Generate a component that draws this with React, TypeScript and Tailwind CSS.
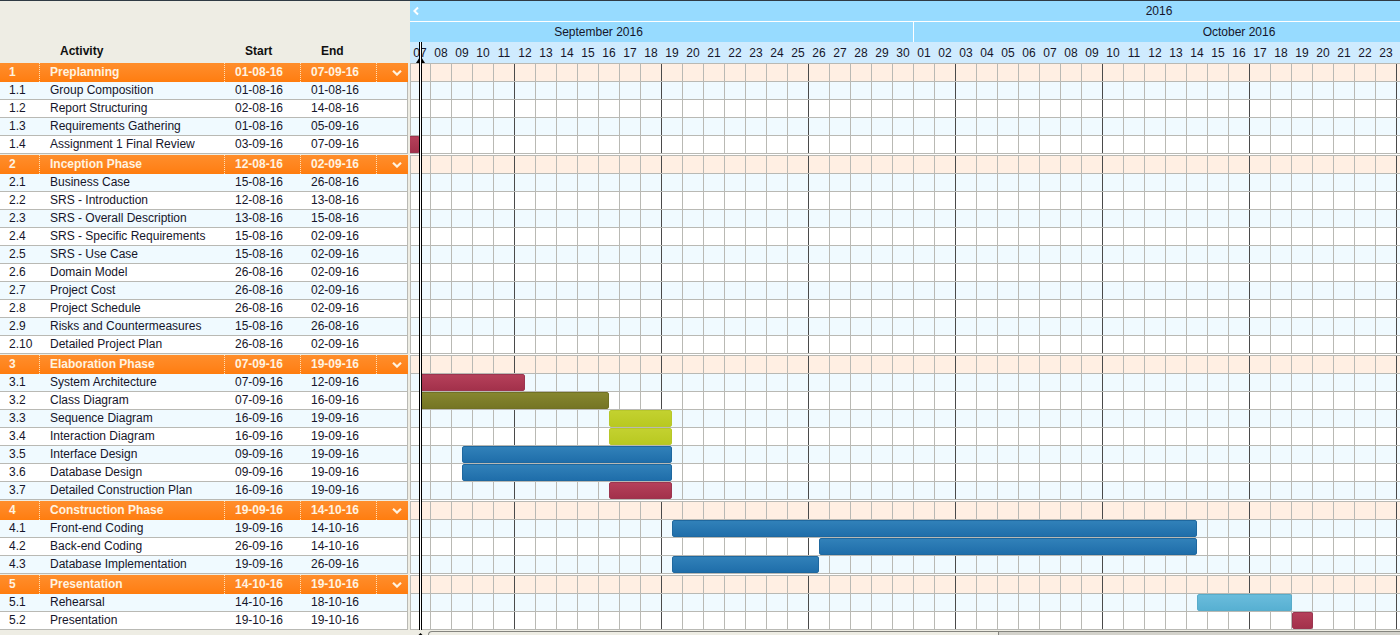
import React from "react";

type Tone = "crimson" | "olive" | "lime" | "blue" | "sky";
type Task = {
  id: string;
  name: string;
  start: string;
  end: string;
  bar?: { from: number; days: number; tone: Tone };
};
type Phase = { id: string; name: string; start: string; end: string; tasks: Task[] };

const DAY = 21;
const HALF_DAY = 10;

// Bar positions are counted in days from 7 September 2016.
const phases: Phase[] = [
  {
    id: "1", name: "Preplanning", start: "01-08-16", end: "07-09-16",
    tasks: [
      { id: "1.1", name: "Group Composition", start: "01-08-16", end: "01-08-16" },
      { id: "1.2", name: "Report Structuring", start: "02-08-16", end: "14-08-16" },
      { id: "1.3", name: "Requirements Gathering", start: "01-08-16", end: "05-09-16" },
      { id: "1.4", name: "Assignment 1 Final Review", start: "03-09-16", end: "07-09-16", bar: { from: -4, days: 4, tone: "crimson" } },
    ],
  },
  {
    id: "2", name: "Inception Phase", start: "12-08-16", end: "02-09-16",
    tasks: [
      { id: "2.1", name: "Business Case", start: "15-08-16", end: "26-08-16" },
      { id: "2.2", name: "SRS - Introduction", start: "12-08-16", end: "13-08-16" },
      { id: "2.3", name: "SRS - Overall Description", start: "13-08-16", end: "15-08-16" },
      { id: "2.4", name: "SRS - Specific Requirements", start: "15-08-16", end: "02-09-16" },
      { id: "2.5", name: "SRS - Use Case", start: "15-08-16", end: "02-09-16" },
      { id: "2.6", name: "Domain Model", start: "26-08-16", end: "02-09-16" },
      { id: "2.7", name: "Project Cost", start: "26-08-16", end: "02-09-16" },
      { id: "2.8", name: "Project Schedule", start: "26-08-16", end: "02-09-16" },
      { id: "2.9", name: "Risks and Countermeasures", start: "15-08-16", end: "26-08-16" },
      { id: "2.10", name: "Detailed Project Plan", start: "26-08-16", end: "02-09-16" },
    ],
  },
  {
    id: "3", name: "Elaboration Phase", start: "07-09-16", end: "19-09-16",
    tasks: [
      { id: "3.1", name: "System Architecture", start: "07-09-16", end: "12-09-16", bar: { from: 0, days: 5, tone: "crimson" } },
      { id: "3.2", name: "Class Diagram", start: "07-09-16", end: "16-09-16", bar: { from: 0, days: 9, tone: "olive" } },
      { id: "3.3", name: "Sequence Diagram", start: "16-09-16", end: "19-09-16", bar: { from: 9, days: 3, tone: "lime" } },
      { id: "3.4", name: "Interaction Diagram", start: "16-09-16", end: "19-09-16", bar: { from: 9, days: 3, tone: "lime" } },
      { id: "3.5", name: "Interface Design", start: "09-09-16", end: "19-09-16", bar: { from: 2, days: 10, tone: "blue" } },
      { id: "3.6", name: "Database Design", start: "09-09-16", end: "19-09-16", bar: { from: 2, days: 10, tone: "blue" } },
      { id: "3.7", name: "Detailed Construction Plan", start: "16-09-16", end: "19-09-16", bar: { from: 9, days: 3, tone: "crimson" } },
    ],
  },
  {
    id: "4", name: "Construction Phase", start: "19-09-16", end: "14-10-16",
    tasks: [
      { id: "4.1", name: "Front-end Coding", start: "19-09-16", end: "14-10-16", bar: { from: 12, days: 25, tone: "blue" } },
      { id: "4.2", name: "Back-end Coding", start: "26-09-16", end: "14-10-16", bar: { from: 19, days: 18, tone: "blue" } },
      { id: "4.3", name: "Database Implementation", start: "19-09-16", end: "26-09-16", bar: { from: 12, days: 7, tone: "blue" } },
    ],
  },
  {
    id: "5", name: "Presentation", start: "14-10-16", end: "19-10-16",
    tasks: [
      { id: "5.1", name: "Rehearsal", start: "14-10-16", end: "18-10-16", bar: { from: 37, days: 4.5, tone: "sky" } },
      { id: "5.2", name: "Presentation", start: "19-10-16", end: "19-10-16", bar: { from: 41.5, days: 1, tone: "crimson" } },
    ],
  },
];

const tones: Record<Tone, string> = {
  crimson: "border-[#9c3550] from-[#b5405a] to-[#a3314b]",
  olive: "border-[#717124] from-[#86862f] to-[#757524]",
  lime: "border-[#b7c72a] from-[#c3d12f] to-[#b9c921]",
  blue: "border-[#1f689f] from-[#3181b9] to-[#1f6eaa]",
  sky: "border-[#58acca] from-[#6abcdc] to-[#57b0d2]",
};

const days = Array.from({ length: 48 }, (_, i) => (i < 24 ? i + 7 : i - 23));

const columns = "grid grid-cols-[40px_185px_76px_76px_1fr]";
const divider = "border-r border-dotted border-[#ffe0b8]";

function ActivityTable() {
  return (
    <table className="block w-[408px] shrink-0">
      <thead className="block">
        <tr className="grid h-[62px] grid-cols-[40px_185px_76px_76px_1fr] items-end pb-[3px] text-left leading-[18px] text-[#101010]">
          <td />
          <th scope="col" className="pl-5">Activity</th>
          <th scope="col" className="pl-5">Start</th>
          <th scope="col" className="pl-5">End</th>
          <td />
        </tr>
      </thead>
      {phases.map((phase) => (
        <tbody key={phase.id} className="mb-px block">
          <tr className={`${columns} h-[19px] bg-linear-to-b from-[#ff8e2b] to-[#ff7d0e] text-left font-bold leading-[19px] text-[#fff3e0]`}>
            <td className={`${divider} pl-[9px]`}>{phase.id}</td>
            <th scope="rowgroup" className={`${divider} pl-[10px]`}>{phase.name}</th>
            <td className={`${divider} pl-[10px]`}>{phase.start}</td>
            <td className={`${divider} pl-[10px]`}>{phase.end}</td>
            <td>
              <button aria-label={`Collapse ${phase.name}`} className="flex h-full w-full items-center justify-center pl-[9px]">
                <svg viewBox="0 0 10 6" className="h-[6px] w-[10px]" fill="none" stroke="#fff3e0" strokeWidth="2.2">
                  <path d="M1 0.8 L5 4.6 L9 0.8" />
                </svg>
              </button>
            </td>
          </tr>
          {phase.tasks.map((task) => (
            <tr key={task.id} className={`${columns} h-[18px] border-r border-b border-[#b9b9b4] bg-white leading-[17px] even:bg-[#f0faff]`}>
              <td className="pl-[9px]">{task.id}</td>
              <td className="pl-[10px] whitespace-nowrap">{task.name}</td>
              <td className="pl-[10px]">{task.start}</td>
              <td className="pl-[10px]">{task.end}</td>
              <td />
            </tr>
          ))}
        </tbody>
      ))}
    </table>
  );
}

function GridRow({ className, bar }: { className: string; bar?: Task["bar"] }) {
  return (
    <div className={`relative flex h-[18px] overflow-hidden border-b border-[#b9b9b4] ${className}`}>
      {days.map((_, i) => (
        <span
          key={i}
          className={`w-[21px] shrink-0 border-r first:border-l first:border-l-[#b9b9b4] ${i % 7 === 4 ? "border-r-[#4a4a4a]" : "border-r-[#b9b9b4]"}`}
        />
      ))}
      {bar && (
        <div
          className={`absolute inset-y-0 rounded-xs border bg-linear-to-b ${tones[bar.tone]}`}
          style={{ left: Math.round(bar.from * DAY) + HALF_DAY, width: Math.round(bar.days * DAY) }}
        />
      )}
    </div>
  );
}

function Timeline() {
  return (
    <div className="relative min-w-0 flex-1 overflow-hidden">
      <div className="h-[62px] overflow-hidden bg-[#97dbff]">
        <div className="flex h-[21px] items-center border-b border-white">
          <button aria-label="Earlier dates" className="flex w-3 shrink-0 items-center justify-center">
            <svg viewBox="0 0 6 10" className="h-[10px] w-[6px]" fill="none" stroke="#fff" strokeWidth="2">
              <path d="M5 1.5 L1.4 5 L5 8.5" />
            </svg>
          </button>
          <div className="w-[1474px] shrink-0 text-center">2016</div>
        </div>
        <div className="flex h-5 leading-5">
          <div className="-ml-[126px] w-[630px] shrink-0 border-r border-white text-center">September 2016</div>
          <div className="w-[650px] shrink-0 text-center">October 2016</div>
        </div>
        <div className="flex h-[21px] bg-[#cfebfe] leading-[22px]">
          {days.slice(0, 47).map((day, i) => (
            <span key={i} className="w-[21px] shrink-0 pr-px text-center">{String(day).padStart(2, "0")}</span>
          ))}
        </div>
      </div>
      {phases.map((phase) => (
        <div key={phase.id} className="border-t border-b border-t-[#b9b9b4] border-b-white last-of-type:border-b-[#eeede4]">
          <GridRow className="bg-[#ffefe3]" />
          {phase.tasks.map((task) => (
            <GridRow key={task.id} className="bg-white even:bg-[#f0faff]" bar={task.bar} />
          ))}
        </div>
      ))}
      <svg viewBox="0 0 9 7" className="absolute top-[55px] left-[6px] h-[7px] w-[9px]">
        <path d="M4.5 0 L9 7 H0 Z" fill="#000" />
      </svg>
      <span className="absolute top-[41px] bottom-px left-[9px] w-[3px] border-x border-black bg-white" />
    </div>
  );
}

export default function App() {
  return (
    <div className="h-screen overflow-hidden bg-[#eeede4] font-['Liberation_Sans',Arial,sans-serif] text-xs text-[#15152a]">
      <main className="flex gap-[2px] border-t border-[#2f3a44]">
        <ActivityTable />
        <Timeline />
      </main>
      <div className="flex">
        <svg viewBox="0 0 9 4" className="mt-[2px] ml-[416px] h-1 w-[9px] shrink-0">
          <path d="M4.5 0 L8.5 4 H0.5 Z" fill="#000" />
        </svg>
        <div className="ml-[3px] flex h-3 flex-1 rounded-tl border-t border-l border-[#85857f]">
          <div className="w-[570px] shrink-0 border-r border-[#85857f]" />
          <div className="flex-1 bg-[#d3d2cb]" />
        </div>
      </div>
    </div>
  );
}
